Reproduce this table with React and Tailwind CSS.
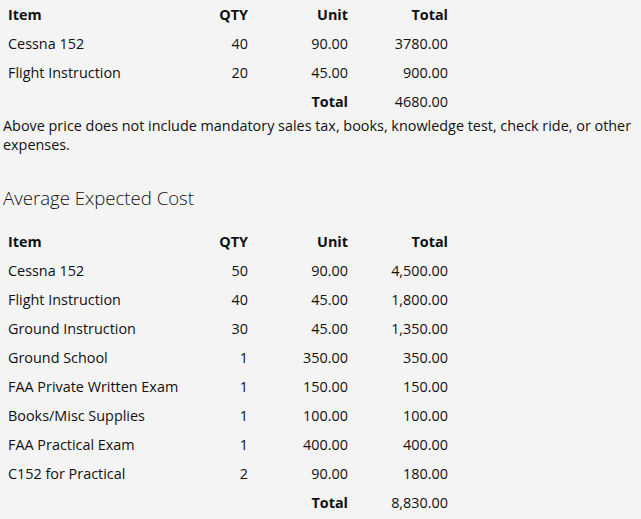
const basic = [
  ['Cessna 152', '40', '90.00', '3780.00'],
  ['Flight Instruction', '20', '45.00', '900.00'],
];

const expected = [
  ['Cessna 152', '50', '90.00', '4,500.00'],
  ['Flight Instruction', '40', '45.00', '1,800.00'],
  ['Ground Instruction', '30', '45.00', '1,350.00'],
  ['Ground School', '1', '350.00', '350.00'],
  ['FAA Private Written Exam', '1', '150.00', '150.00'],
  ['Books/Misc Supplies', '1', '100.00', '100.00'],
  ['FAA Practical Exam', '1', '400.00', '400.00'],
  ['C152 for Practical', '2', '90.00', '180.00'],
];

const CostTable = ({ rows, total }) => (
  <div className="w-[456px]">
    <div className="grid grid-cols-[156px_100px_100px_100px] h-[29px] items-center font-bold">
      <div className="px-2">Item</div>
      <div className="px-2 text-right">QTY</div>
      <div className="px-2 text-right">Unit</div>
      <div className="px-2 text-right">Total</div>
    </div>
    {rows.map(r => (
      <div key={r[0]} className="grid grid-cols-[156px_100px_100px_100px] h-[29px] items-center">
        <div className="px-2 whitespace-nowrap">{r[0]}</div>
        <div className="px-2 text-right">{r[1]}</div>
        <div className="px-2 text-right">{r[2]}</div>
        <div className="px-2 text-right">{r[3]}</div>
      </div>
    ))}
    <div className="grid grid-cols-[156px_100px_100px_100px] h-[29px] items-center">
      <div />
      <div />
      <div className="px-2 text-right font-bold">Total</div>
      <div className="px-2 text-right">{total}</div>
    </div>
  </div>
);

export default function App() {
  return (
    <div className="min-h-[519px] bg-[#f4f4f4] text-[#111] text-[14.4px]" style={{ fontFamily: '"Open Sans", sans-serif' }}>
      <CostTable rows={basic} total="4680.00" />
      <p className="leading-[19px] pl-[3px]">
        Above price does not include mandatory sales tax, books, knowledge test, check ride, or other expenses.
      </p>
      <h2 className="text-[18.6px] font-light leading-[24px] mt-[32px] mb-[17px] pl-[3px]">Average Expected Cost</h2>
      <CostTable rows={expected} total="8,830.00" />
    </div>
  );
}
